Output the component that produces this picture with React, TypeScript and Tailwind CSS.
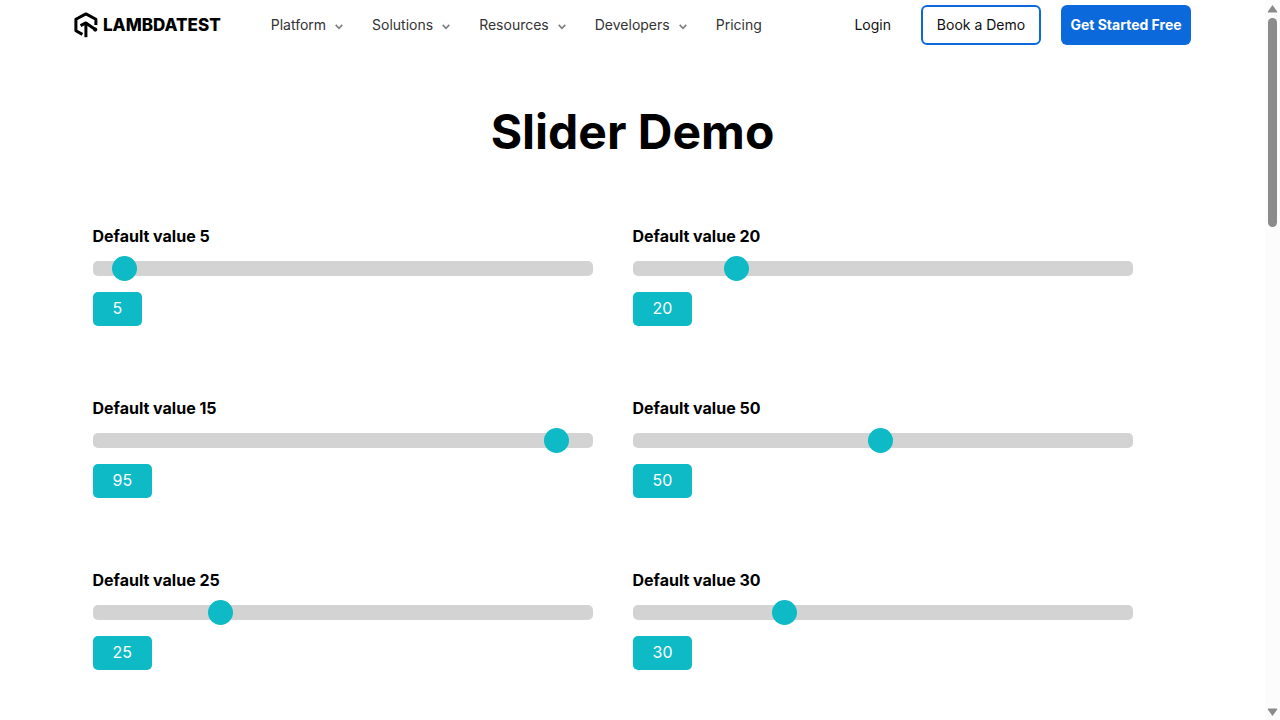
import { useState } from "react";

const menus = ["Platform", "Solutions", "Resources", "Developers"];

const sliders = [
  { label: "Default value 5", value: 5 },
  { label: "Default value 20", value: 20 },
  { label: "Default value 15", value: 95 },
  { label: "Default value 50", value: 50 },
  { label: "Default value 25", value: 25 },
  { label: "Default value 30", value: 30 },
];

function Logo() {
  return (
    <a href="#" className="flex items-center gap-1 text-black">
      <svg width="25" height="26" viewBox="0 0 25 26" fill="none" stroke="currentColor" strokeWidth="3">
        <path d="M8.4 22.4 L1.9 18.8 V7.3 L11.9 1.9 L21.9 7.3 V13" strokeLinejoin="round" />
        <path d="M6.6 13.6 L11.9 10.9 L21 17.2" strokeLinejoin="round" />
        <path d="M11.9 11.3 V25.2" />
        <circle cx="21.2" cy="17.6" r="2.1" fill="currentColor" stroke="none" />
      </svg>
      <span className="text-[17px] leading-6 font-extrabold">LAMBDATEST</span>
    </a>
  );
}

function Chevron() {
  return (
    <svg width="8" height="6" viewBox="0 0 8 6" fill="none" stroke="#808080" strokeWidth="1.7" className="mt-1">
      <path d="M0.7 0.9 L4 4.3 L7.3 0.9" />
    </svg>
  );
}

function Header() {
  return (
    <header className="mx-auto flex h-[50px] w-full max-w-[1117px] items-center text-sm">
      <Logo />
      <nav className="ml-[50px] flex items-center gap-[29px] text-[#333333]">
        {menus.map((name) => (
          <button key={name} type="button" className="flex items-center gap-[9px]">
            {name}
            <Chevron />
          </button>
        ))}
        <a href="#">Pricing</a>
      </nav>
      <div className="ml-auto flex items-center gap-5 text-[#101010]">
        <a href="#" className="mr-[10px]">Login</a>
        <button type="button" className="h-10 w-[120px] rounded-md border-2 border-[#0b69dc]">Book a Demo</button>
        <button type="button" className="h-10 w-[130px] rounded-md bg-[#0b69dc] font-bold text-white">Get Started Free</button>
      </div>
    </header>
  );
}

function Slider({ id, label, initial }: { id: string; label: string; initial: number }) {
  const [value, setValue] = useState(initial);
  return (
    <div className="flex h-[172px] flex-col items-start pr-10">
      <label htmlFor={id} className="text-base leading-6 font-bold">{label}</label>
      <input
        id={id}
        type="range"
        min={1}
        max={100}
        value={value}
        onChange={(event) => setValue(Number(event.target.value))}
        className="mt-[13px] h-[15px] w-full appearance-none rounded-[5px] bg-[#d3d3d3] outline-none [&::-webkit-slider-thumb]:size-[25px] [&::-webkit-slider-thumb]:cursor-pointer [&::-webkit-slider-thumb]:appearance-none [&::-webkit-slider-thumb]:rounded-full [&::-webkit-slider-thumb]:bg-[#0ebac5]"
      />
      <output htmlFor={id} className="mt-4 rounded-[5px] bg-[#0ebac5] px-5 pt-1 pb-1.5 text-base leading-6 text-white">
        {value}
      </output>
    </div>
  );
}

function ScrollRail() {
  return (
    <div aria-hidden="true" className="sticky top-0 flex h-screen w-[15px] shrink-0 flex-col items-center bg-[#fcfcfc]">
      <svg width="11" height="18" viewBox="0 0 11 18" fill="#8b8b8b" className="shrink-0">
        <path d="M5.5 5 L10.2 11.5 Q10.4 12.5 9.5 12.5 H1.5 Q0.6 12.5 0.8 11.5 Z" />
      </svg>
      <div className="h-[209px] w-[9px] rounded-full bg-[#8b8b8b]" />
      <svg width="11" height="18" viewBox="0 0 11 18" fill="#8b8b8b" className="mt-auto shrink-0">
        <path d="M5.5 14 L10.2 7.5 Q10.4 6.5 9.5 6.5 H1.5 Q0.6 6.5 0.8 7.5 Z" />
      </svg>
    </div>
  );
}

export default function App() {
  return (
    <div className="flex h-screen overflow-hidden bg-white font-[Inter,sans-serif] text-black">
      <div className="min-w-0 flex-1">
        <Header />
        <main>
          <h1 className="pt-[52px] text-center text-5xl leading-[60px] font-bold">Slider Demo</h1>
          <section className="mx-auto mt-[62px] grid max-w-[1080px] grid-cols-2">
            {sliders.map((item) => (
              <Slider key={item.label} id={item.label.replaceAll(" ", "-")} label={item.label} initial={item.value} />
            ))}
          </section>
        </main>
      </div>
      <ScrollRail />
    </div>
  );
}
